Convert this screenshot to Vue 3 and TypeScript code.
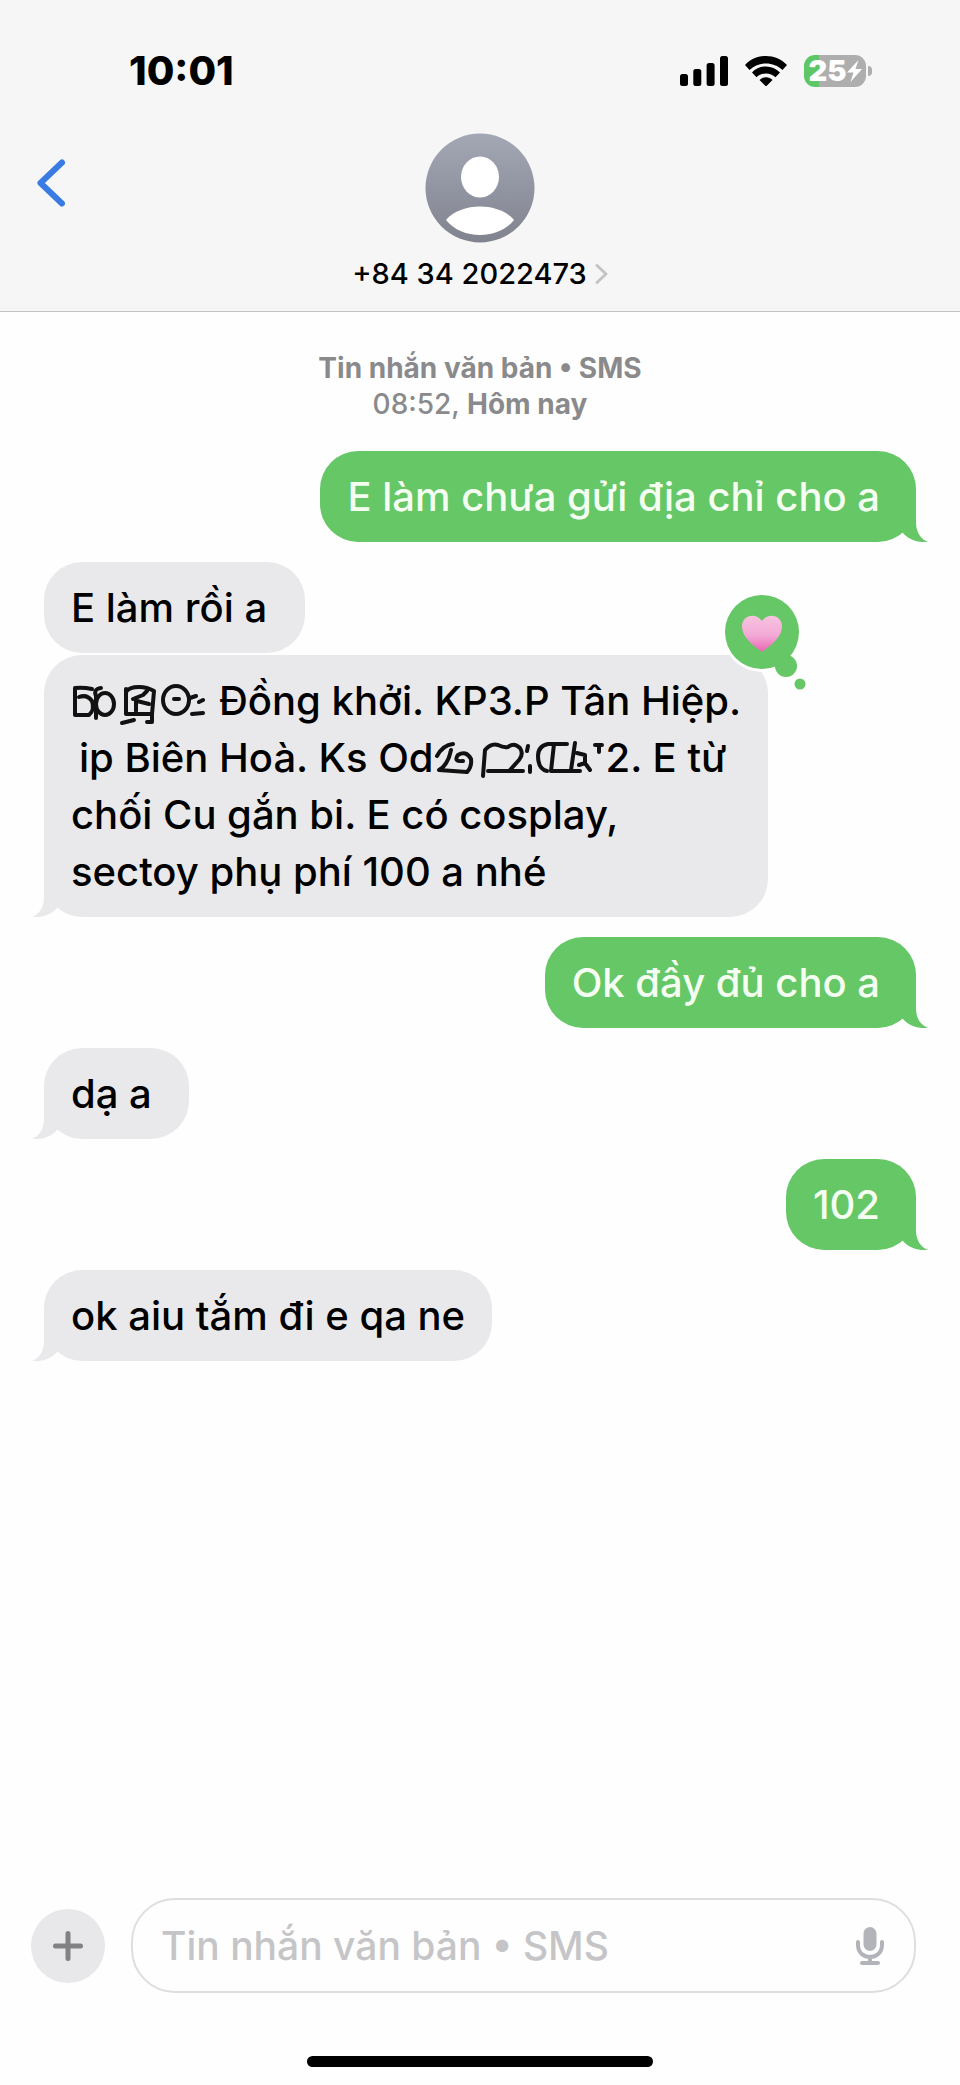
<script setup lang="ts">
import { ref } from 'vue'

interface Message {
  id: number
  mine: boolean
  text: string
  tail: boolean
}

const draft = ref('')
const before: Message[] = [
  { id: 1, mine: true, text: 'E làm chưa gửi địa chỉ cho a', tail: true },
  { id: 2, mine: false, text: 'E làm rồi a\u00a0', tail: false },
]
const after: Message[] = [
  { id: 4, mine: true, text: 'Ok đầy đủ cho a', tail: true },
  { id: 5, mine: false, text: 'dạ a\u00a0', tail: true },
  { id: 6, mine: true, text: '102', tail: true },
  { id: 7, mine: false, text: 'ok aiu tắm đi e qa ne', tail: true },
]
const tailPath = 'M40 0V20C40 31 45 37 52 40C41 41 32 37 27 31L16 20L28 0Z'
</script>

<template>
  <div class="phone">
    <header class="top">
      <div class="status">
        <time class="clock">10:01</time>
        <div class="indicators">
          <svg class="signal" viewBox="0 0 48 30" aria-label="Signal">
            <rect x="0" y="18" width="8" height="12" rx="2.5" />
            <rect x="13.3" y="13" width="8" height="17" rx="2.5" />
            <rect x="26.6" y="7" width="8" height="23" rx="2.5" />
            <rect x="40" y="0" width="8" height="30" rx="2.5" />
          </svg>
          <svg class="wifi" viewBox="0 0 42 30" aria-label="Wi-Fi">
            <path d="M0 9C11-3 31-3 42 9L37.500 14C28.500 5.200 13.500 5.200 4.500 14Z" />
            <path d="M7 16.500C14.500 8.500 27.500 8.500 35 16.500L30.500 21.300C25.500 16.200 16.500 16.200 11.500 21.300Z" />
            <path d="M14.500 24C18 20.300 24 20.300 27.500 24L21 30.500Z" />
          </svg>
          <div class="battery">
            <span class="level">25</span>
            <svg class="bolt" viewBox="0 0 15 22" aria-hidden="true">
              <path d="M11.500 0L0 12.500H6.500L3.500 22L15 9H8.500Z" />
            </svg>
          </div>
        </div>
      </div>
      <div class="nav">
        <button class="back" type="button" aria-label="Back">
          <svg viewBox="0 0 28 48"><path d="M25 3.500L3.500 24L25 44.500" /></svg>
        </button>
        <button class="contact" type="button">
          <svg class="avatar" viewBox="0 0 110 110" aria-hidden="true">
            <defs>
              <linearGradient id="avatar-fill" x1="0" y1="0" x2="0" y2="1">
                <stop offset="0" stop-color="#a3a8b5" />
                <stop offset="1" stop-color="#81838e" />
              </linearGradient>
            </defs>
            <circle cx="55" cy="55" r="54.500" fill="url(#avatar-fill)" />
            <ellipse cx="55" cy="44" rx="19" ry="20.500" fill="#fff" />
            <path d="M21 87C36 69 74 69 89 87C73 107 37 107 21 87Z" fill="#fff" />
          </svg>
          <span class="name">
            +84 34 2022473
            <svg class="chevron" viewBox="0 0 13 20" aria-hidden="true"><path d="M2 1.500L11 10L2 18.500" /></svg>
          </span>
        </button>
      </div>
    </header>

    <main class="thread">
      <p class="stamp"><b>Tin nhắn văn bản • SMS</b><br />08:52, <b>Hôm nay</b></p>

      <div v-for="m in before" :key="m.id" class="bubble" :class="m.mine ? 'mine' : 'theirs'">
        {{ m.text }}
        <svg v-if="m.tail" class="tail" viewBox="0 0 52 40" aria-hidden="true"><path :d="tailPath" /></svg>
      </div>

      <div class="bubble theirs grouped">
        <svg class="smudge first" viewBox="0 0 134 42" aria-hidden="true">
          <path d="M21 5Q12 3 4 4V31H18Q24 26 21 17Q16 10 8 13M30 4Q22 5 25 12V34" />
          <ellipse cx="34" cy="20" rx="9" ry="11" />
          <path d="M55 5V30H81L83 7Q76 3 68 3Q58 3 55 8M65 15V27M62 15L72 11L76 7M66 17L78 20M81 30V38H76M51 39L63 36" />
          <ellipse cx="105" cy="16" rx="13" ry="14" />
          <path d="M103 15H108M119 14L125 12M128 18L132 16M121 30L132 29" />
        </svg>Đồng khởi. KP3.P Tân Hiệp.<br />
        <span class="shifted">ip Biên Hoà. Ks Od</span><svg class="smudge second" viewBox="0 0 172 42" aria-hidden="true">
          <path d="M3 15Q9 4 19 3M17 9Q14 24 5 29L33 31Q38 26 37 18Q32 9 24 14Q19 21 29 20" />
          <path d="M49 35L51 9Q57 2 64 4Q70 7 74 6Q80 1 86 7Q90 13 85 19L76 29M54 30H89M94 5L93 10M96 25V31" />
          <path d="M133 3H114Q104 5 104 15Q104 28 113 30M120 3L117 30H146M141 2L137 29M143 12L151 14V22L145 24M151 22L156 29M161 4H168M165 4V11" />
        </svg>2. E từ<br />
        chối Cu gắn bi. E có cosplay,<br />
        sectoy phụ phí 100 a nhé
        <svg class="tail" viewBox="0 0 52 40" aria-hidden="true"><path :d="tailPath" /></svg>
        <svg class="reaction" viewBox="0 0 86 100" role="img" aria-label="Heart">
          <defs>
            <linearGradient id="heart-fill" x1="0" y1="0" x2="0" y2="1">
              <stop offset="0" stop-color="#f7c4df" />
              <stop offset="0.550" stop-color="#f3a8d6" />
              <stop offset="1" stop-color="#ea64b4" />
            </linearGradient>
          </defs>
          <circle cx="41" cy="40" r="40" fill="#fff" />
          <circle cx="41" cy="40" r="37" fill="#65c766" />
          <circle cx="65" cy="74" r="11" fill="#65c766" />
          <circle cx="79" cy="92" r="5.500" fill="#65c766" />
          <path d="M41 60C35 55 21 47 21 34C21 23 35 20 41 29C47 20 61 23 61 34C61 47 47 55 41 60Z" fill="url(#heart-fill)" />
        </svg>
      </div>

      <div v-for="m in after" :key="m.id" class="bubble" :class="m.mine ? 'mine' : 'theirs'">
        {{ m.text }}
        <svg v-if="m.tail" class="tail" viewBox="0 0 52 40" aria-hidden="true"><path :d="tailPath" /></svg>
      </div>
    </main>

    <footer class="bottom">
      <form class="composer" @submit.prevent>
        <button class="add" type="button" aria-label="Add">
          <svg viewBox="0 0 30 30"><path d="M15 2.500V27.500M2.500 15H27.500" /></svg>
        </button>
        <div class="field">
          <input v-model="draft" type="text" aria-label="Tin nhắn" placeholder="Tin nhắn văn bản • SMS" />
          <button class="mic" type="button" aria-label="Dictate">
            <svg viewBox="0 0 28 38">
              <rect x="7.500" y="0" width="13" height="24" rx="6.5" />
              <path d="M2 15V18C2 34 26 34 26 18V15M14 30V36M6 36H22" />
            </svg>
          </button>
        </div>
      </form>
      <div class="home"></div>
    </footer>
  </div>
</template>

<style>
body {
  margin: 0;
  background: #fefefe;
}
</style>

<style scoped>
.phone {
  display: flex;
  flex-direction: column;
  min-height: 100vh;
  background: #fefefe;
  color: #000;
  font-family: Inter, "Liberation Sans", sans-serif;
  font-weight: 500;
}
button {
  padding: 0;
  border: 0;
  background: none;
  color: inherit;
  font: inherit;
}
svg {
  display: block;
}
.top {
  background: #f6f6f6;
  border-bottom: 1px solid #c2c2c4;
}
.status {
  display: flex;
  align-items: center;
  justify-content: space-between;
  padding: 46px 88px 0 129px;
}
.clock {
  font-size: 40px;
  line-height: 50px;
  font-weight: 800;
}
.indicators {
  display: flex;
  align-items: center;
  gap: 17px;
}
.signal {
  width: 48px;
  height: 30px;
}
.wifi {
  width: 42px;
  height: 30px;
}
.battery {
  position: relative;
  display: flex;
  align-items: center;
  justify-content: center;
  width: 62px;
  height: 32px;
  margin-right: 6px;
  border-radius: 11px;
  background: linear-gradient(90deg, #5fc666 25%, #aeaeae 25%);
  color: #fff;
}
.battery::after {
  content: "";
  position: absolute;
  right: -6px;
  top: 11px;
  width: 4px;
  height: 10px;
  border-radius: 0 5px 5px 0;
  background: #aeaeae;
}
.level {
  font-size: 29px;
  line-height: 32px;
  font-weight: 900;
}
.bolt {
  width: 15px;
  height: 22px;
  fill: #fff;
}
.nav {
  display: grid;
  grid-template-columns: 1fr auto 1fr;
  padding: 37px 37px 19px;
}
.back {
  justify-self: start;
  align-self: start;
  margin-top: 26px;
}
.back svg {
  width: 28px;
  height: 48px;
}
.back path {
  fill: none;
  stroke: #3a7be3;
  stroke-width: 6;
  stroke-linecap: round;
  stroke-linejoin: round;
}
.contact {
  display: flex;
  flex-direction: column;
  align-items: center;
  gap: 13px;
}
.avatar {
  width: 110px;
  height: 110px;
}
.name {
  display: flex;
  align-items: center;
  gap: 8px;
  font-size: 29px;
  line-height: 36px;
}
.chevron {
  width: 13px;
  height: 20px;
}
.chevron path {
  fill: none;
  stroke: #c4c4c6;
  stroke-width: 3;
  stroke-linecap: round;
  stroke-linejoin: round;
}
.thread {
  flex: 1;
  display: flex;
  flex-direction: column;
  padding: 38px 44px 0;
}
.stamp {
  margin: 0 0 9px;
  color: #8a8a8c;
  font-size: 28px;
  line-height: 36px;
  text-align: center;
}
.stamp b {
  font-weight: 700;
}
.bubble {
  position: relative;
  box-sizing: border-box;
  margin-top: 20px;
  padding: 17px 27px;
  border-radius: 38px;
  font-size: 40px;
  line-height: 57px;
  white-space: nowrap;
}
.mine {
  align-self: flex-end;
  padding-right: 36px;
  background: #65c766;
  color: #f4fff2;
  fill: #65c766;
}
.theirs {
  align-self: flex-start;
  background: #e9e9eb;
  fill: #e9e9eb;
}
.grouped {
  margin-top: 2px;
}
.tail {
  position: absolute;
  right: -12px;
  bottom: 0;
  width: 52px;
  height: 40px;
}
.theirs .tail {
  right: auto;
  left: -12px;
  transform: scaleX(-1);
}
.smudge {
  display: inline-block;
  height: 42px;
  vertical-align: -11px;
}
.smudge path,
.smudge ellipse {
  fill: none;
  stroke: #111;
  stroke-width: 4;
  stroke-linecap: round;
  stroke-linejoin: round;
}
.smudge.first {
  width: 134px;
  margin-right: 14px;
}
.smudge.second {
  width: 172px;
}
.shifted {
  padding-left: 8px;
}
.reaction {
  position: absolute;
  top: -63px;
  right: -39px;
  width: 86px;
  height: 100px;
}
.composer {
  display: flex;
  align-items: center;
  gap: 26px;
  padding: 0 44px 0 31px;
}
.add {
  display: grid;
  place-items: center;
  width: 74px;
  height: 74px;
  border-radius: 50%;
  background: #e8e8ea;
}
.add svg {
  width: 30px;
  height: 30px;
}
.add path {
  stroke: #828285;
  stroke-width: 5;
  stroke-linecap: round;
}
.field {
  flex: 1;
  display: flex;
  align-items: center;
  box-sizing: border-box;
  height: 95px;
  padding: 0 30px 0 28px;
  border: 2px solid #dedede;
  border-radius: 44px;
}
input {
  flex: 1;
  min-width: 0;
  padding: 0;
  border: 0;
  outline: 0;
  background: none;
  color: #000;
  font: inherit;
  font-size: 39px;
  line-height: 57px;
}
input::placeholder {
  color: #c5c5c7;
  opacity: 1;
}
.mic svg {
  width: 28px;
  height: 38px;
  fill: #b3b4ba;
}
.mic path {
  fill: none;
  stroke: #b3b4ba;
  stroke-width: 4;
  stroke-linecap: round;
}
.home {
  width: 36%;
  height: 11px;
  margin: 63px auto 18px;
  border-radius: 6px;
  background: #000;
}
</style>
